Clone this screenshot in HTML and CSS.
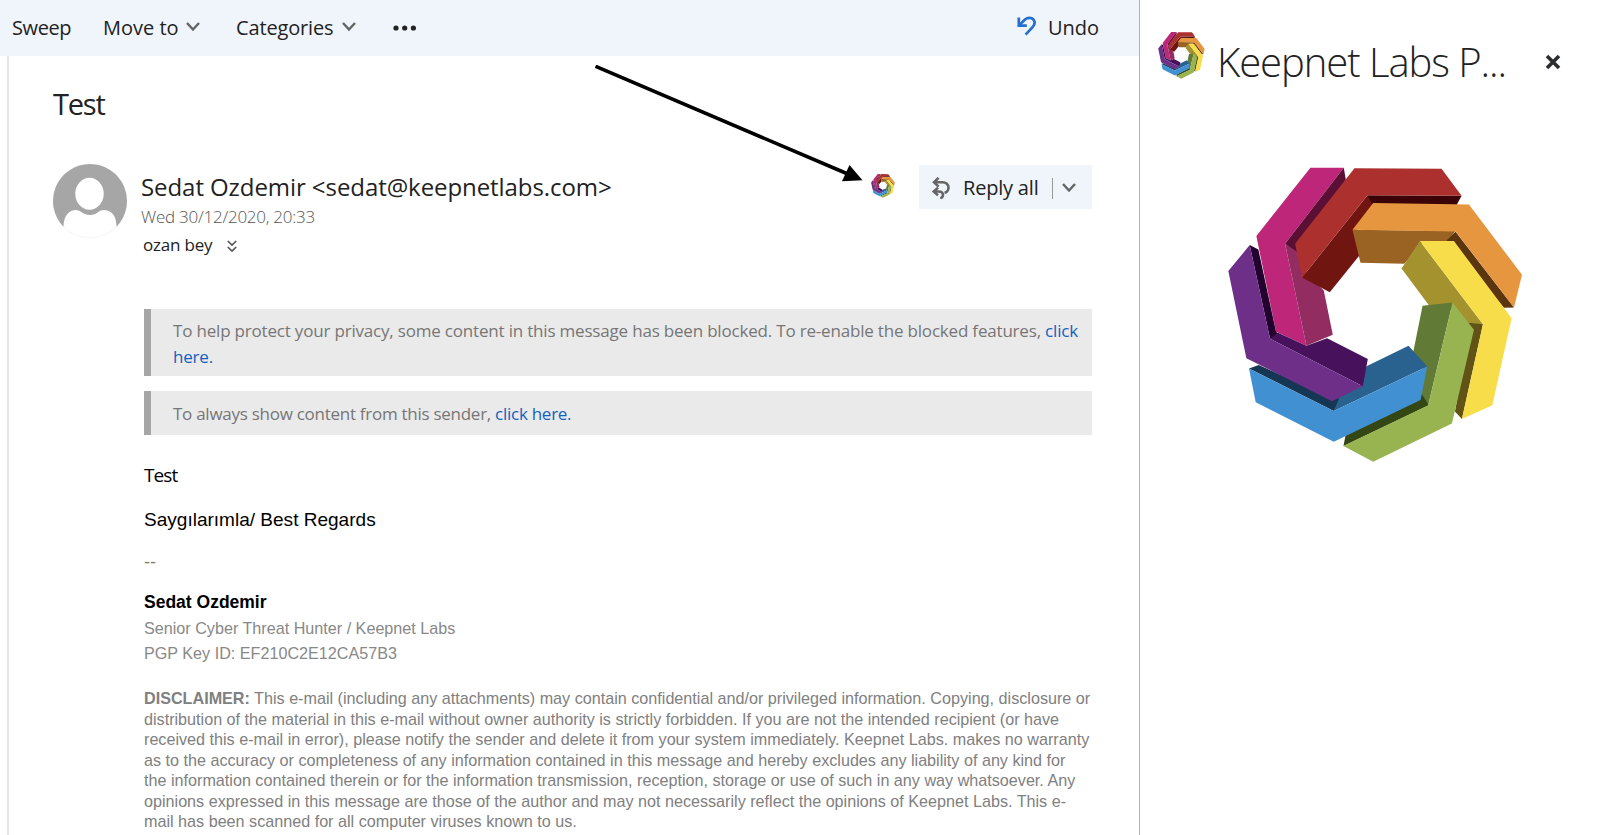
FILE: index.html
```html
<!DOCTYPE html>
<html lang="en">
<head>
<meta charset="utf-8">
<title>Test - Mail</title>
<link rel="stylesheet" href="styles.css">
</head>
<body>
<svg class="defs" width="0" height="0">
  <symbol id="logo" viewBox="52 52 890 890">
    <polygon fill="#be2679" points="302,54 402,54 226,282 290,588 199,546 140,259"/>
    <polygon fill="#5b0f35" points="402,54 408,90 270,282 270,320 226,282"/>
    <polygon fill="#922c61" points="226,282 262,306 290,370 342,422 369,555 290,588"/>
    <polygon fill="#3b0307" points="473,137 755,138 740,166 490,168 473,182"/>
    <polygon fill="#701510" points="473,137 490,170 440,240 448,318 360,427 277,383"/>
    <polygon fill="#ac302e" points="434,56 695,57 755,138 473,137 277,383 256,282"/>
    <polygon fill="#9a6324" points="428,240 737,244 712,276 640,280 583,342 452,339"/>
    <polygon fill="#5a350e" points="737,246 912,473 882,474 720,280 710,272"/>
    <polygon fill="#e6963e" points="490,160 777,164 936,375 912,473 737,245 428,240"/>
    <polygon fill="#a4922f" points="630,274 819,523 780,535 720,480 657,466 575,356"/>
    <polygon fill="#615316" points="775,519 819,523 756,807 735,785 780,540"/>
    <polygon fill="#f8dd4a" points="630,274 732,274 905,505 847,766 756,807 819,523"/>
    <polygon fill="#617a35" points="638,468 728,458 655,766 630,745 640,650 610,607"/>
    <polygon fill="#334614" points="401,888 407,857 625,740 636,733 657,766"/>
    <polygon fill="#97b451" points="728,458 792,540 726,821 490,935 401,888 655,766"/>
    <polygon fill="#29628f" points="372,783 380,740 452,705 470,649 596,588 652,650"/>
    <polygon fill="#163754" points="118,656 147,645 367,745 388,745 372,783"/>
    <polygon fill="#4190d2" points="118,656 372,783 652,650 632,750 372,875 138,757"/>
    <polygon fill="#24022f" points="120,286 146,299 199,546 210,555 181,567"/>
    <polygon fill="#48115b" points="181,567 205,549 290,588 352,565 474,627 459,709"/>
    <polygon fill="#6e2f88" points="120,286 181,567 459,709 367,754 110,625 56,364"/>
  </symbol>
  <symbol id="chevron" viewBox="0 0 14 10">
    <path d="M1 1 L7 7.500 L13 1" fill="none" stroke="#666" stroke-width="2.5"/>
  </symbol>
</svg>

<main class="reading-pane">
  <nav class="toolbar">
    <span class="tool sweep">Sweep</span>
    <span class="tool move">Move to</span>
    <svg class="chevron chevron-move"><use href="#chevron"/></svg>
    <span class="tool categories">Categories</span>
    <svg class="chevron chevron-categories"><use href="#chevron"/></svg>
    <svg class="dots" viewBox="0 0 24 6"><circle cx="3" cy="3" r="2.600"/><circle cx="11.7" cy="3" r="2.600"/><circle cx="20.4" cy="3" r="2.600"/></svg>
    <svg class="undo-icon" viewBox="0 0 20 20"><g fill="none" stroke="#2470d0" stroke-width="2.700"><path d="M1.8 1.6V9.6H9.8"/><path d="M2.2 9.2L8 3.6C10.500 1.400 14.400 1.200 16.400 3.500C18.200 5.900 17.900 8.500 15.800 10.800L8.6 18.6"/></g></svg>
    <span class="tool">Undo</span>
  </nav>

  <article class="message">
    <h1 class="subject">Test</h1>
    <header class="message-header">
      <svg class="avatar" viewBox="0 0 74 74">
        <circle cx="37" cy="37" r="36.8" fill="#fff" stroke="#e6e6e6" stroke-width=".4"/>
        <path fill="#a6a6a6" d="M37 0A37 37 0 0 1 63.5 62.8C63.5 50 57 46 50.5 46C46 46 44 51 37 51C30 51 28 46 22.5 46C17 46 10.5 51 10.5 62.8A37 37 0 0 1 37 0Z"/>
        <ellipse cx="36.500" cy="29.800" rx="14.200" ry="16" fill="#fff"/>
      </svg>
      <div class="sender">
        <div class="sender-name">Sedat Ozdemir &lt;sedat@keepnetlabs.com&gt;</div>
        <div class="date">Wed 30/12/2020, 20:33</div>
        <div class="recipient">ozan bey
          <svg class="expand" viewBox="0 0 10 12"><path d="M.8 1L5 5L9.200 1M.8 7L5 11L9.200 7" fill="none" stroke="#555" stroke-width="1.700"/></svg>
        </div>
      </div>
      <svg class="addin"><use href="#logo"/></svg>
      <button class="reply">
        <svg class="reply-icon" viewBox="0 0 18 22"><g fill="none" stroke="#666" stroke-width="2.600"><path d="M6.600 .8L2 5.200L6.600 9.600"/><path d="M2.500 5.200H10.500C14 5.200 16.500 7.400 16.500 10.500C16.500 13.500 14.500 15.500 12.500 15.800"/><path d="M6 10.800L1.800 14.500L6 18.200"/><path d="M2.300 14.500H6.500C9.500 14.500 11 16 11 18C11 19.800 10 21 8.300 21.300"/></g></svg>
        <span class="reply-label">Reply all</span>
        <span class="reply-divider"></span>
        <svg class="reply-chevron"><use href="#chevron"/></svg>
      </button>
    </header>

    <section class="content">
      <div class="notice notice-privacy">To help protect your privacy, some content in this message has been blocked. To re-enable the blocked features, <a>click<br>here.</a></div>
      <div class="notice notice-sender">To always show content from this sender, <a>click here.</a></div>
      <p class="body-text">Test</p>
      <p class="regards">Saygılarımla/ Best Regards</p>
      <p class="dashes">--</p>
      <p class="signature-name">Sedat Ozdemir</p>
      <p class="signature-line">Senior Cyber Threat Hunter / Keepnet Labs</p>
      <p class="signature-line">PGP Key ID: EF210C2E12CA57B3</p>
      <p class="disclaimer"><b>DISCLAIMER:</b> This e-mail (including any attachments) may contain confidential and/or privileged information. Copying, disclosure or<br>distribution of the material in this e-mail without owner authority is strictly forbidden. If you are not the intended recipient (or have<br>received this e-mail in error), please notify the sender and delete it from your system immediately. Keepnet Labs. makes no warranty<br>as to the accuracy or completeness of any information contained in this message and hereby excludes any liability of any kind for<br>the information contained therein or for the information transmission, reception, storage or use of such in any way whatsoever. Any<br>opinions expressed in this message are those of the author and may not necessarily reflect the opinions of Keepnet Labs. This e-<br>mail has been scanned for all computer viruses known to us.</p>
    </section>
  </article>
</main>

<aside class="addin-panel">
  <header class="panel-header">
    <svg class="panel-logo"><use href="#logo"/></svg>
    <h2 class="panel-title">Keepnet Labs P...</h2>
    <svg class="close" viewBox="0 0 16 16"><path d="M2 2L14 14M14 2L2 14" stroke="#2b2d31" stroke-width="3.600"/></svg>
  </header>
  <svg class="hero-logo"><use href="#logo"/></svg>
</aside>

<svg class="pointer" viewBox="0 0 270 120">
  <path d="M.5 1.300L254 109.500" stroke="#000" stroke-width="3.600"/>
  <polygon points="254.500,100 267.500,115.200 247,116.300"/>
</svg>
</body>
</html>
```
FILE: styles.css
```css
* { box-sizing: border-box; }
body {
  margin: 0;
  width: 1600px;
  height: 835px;
  overflow: hidden;
  display: flex;
  position: relative;
  background: #fff;
  color: #222;
  font-family: "Open Sans", "Noto Sans", sans-serif;
}
h1, h2, p { margin: 0; font-weight: 400; }
svg { display: block; flex: none; }
.defs { position: absolute; }

.reading-pane { width: 1139px; flex: none; }
.toolbar {
  height: 56px;
  padding: 0 40px 2px 12px;
  display: flex;
  align-items: center;
  background: #f0f5fb;
  font-size: 20px;
  white-space: nowrap;
}
.sweep { width: 91px; letter-spacing: -.4px; }
.move { width: 83px; }
.chevron { width: 14px; height: 10px; }
.chevron-move { margin-right: 36px; }
.categories { width: 106px; letter-spacing: -.15px; }
.chevron-categories { margin-right: 37px; }
.dots { width: 24px; height: 6px; margin-top: 1px; fill: #222; }
.undo-icon { width: 20px; height: 20px; margin: 0 11px 2px auto; }

.message {
  height: 779px;
  margin-left: 7px;
  padding: 28px 47px 0 44px;
  border-left: 2px solid #e4e4e4;
}
.subject { font-size: 29px; line-height: 40px; letter-spacing: -1.2px; }
.message-header { margin-top: 40px; height: 95px; display: flex; align-items: flex-start; }
.avatar { width: 74px; height: 74px; }
.sender { padding: 7px 0 0 14px; white-space: nowrap; }
.sender-name { font-size: 24px; line-height: 32px; letter-spacing: -.07px; }
.date { font-size: 17px; line-height: 28px; font-weight: 300; letter-spacing: -.25px; color: #555; }
.recipient { display: flex; align-items: center; gap: 15px; font-size: 17px; line-height: 28px; letter-spacing: -.2px; padding-left: 2px; }
.expand { width: 10px; height: 12px; margin-top: 2px; }
.addin { width: 24px; height: 24px; margin: 10px 24px 0 auto; }
.reply {
  width: 173px;
  height: 44px;
  margin-top: 1px;
  padding: 1px 0 0 13px;
  display: flex;
  align-items: center;
  border: 0;
  background: #f0f5fb;
  color: #222;
  font: 20px "Open Sans", "Noto Sans", sans-serif;
  letter-spacing: -.2px;
  text-align: left;
}
.reply-icon { width: 18px; height: 22px; }
.reply-label { width: 89px; margin-left: 13px; }
.reply-divider { width: 1px; height: 21px; margin-top: 2px; background: #999; }
.reply-chevron { width: 14px; height: 10px; margin: 0 0 0 9px; }

.content { margin: 50px 0 0 91px; color: #000; white-space: nowrap; font-family: "Liberation Sans", Arial, sans-serif; }
.notice {
  border-left: 7px solid #a6a6a6;
  background: #eaeaea;
  color: #767676;
  font: 17px/26px "Open Sans", "Noto Sans", sans-serif;
  letter-spacing: -.19px;
}
.notice a { color: #1560bd; }
.notice-privacy { padding: 9px 0 6px 22px; }
.notice-sender { margin-top: 15px; padding: 10px 0 8px 22px; letter-spacing: -.27px; }
.body-text { margin-top: 27px; font: 19px/26px "Open Sans", "Noto Sans", sans-serif; letter-spacing: -.9px; }
.regards { margin-top: 19px; font-size: 19.050px; line-height: 26px; }
.dashes { margin-top: 16px; font-size: 18px; line-height: 26px; color: #808080; }
.signature-name { margin-top: 15px; font-size: 17.500px; line-height: 25px; font-weight: 700; }
.signature-line { font-size: 16.160px; line-height: 25px; color: #888; }
.signature-name + .signature-line { margin-top: 1px; }
.disclaimer { margin-top: 22px; font-size: 16.170px; line-height: 20.550px; color: #808080; }

.addin-panel { flex: 1; border-left: 1px solid #b4b4b4; padding: 32px 39px 0 18px; }
.panel-header { display: flex; align-items: flex-start; height: 135px; }
.panel-logo { width: 47px; height: 47px; }
.panel-title { margin: 5px 0 0 12px; font-size: 40px; line-height: 50px; font-weight: 300; letter-spacing: -1.050px; white-space: nowrap; }
.close { width: 16px; height: 16px; margin: 22px 0 0 auto; }
.hero-logo { width: 297px; height: 297px; margin-left: 69px; }

/* Annotation arrow pointing at the add-in button. */
.pointer { position: absolute; left: 595px; top: 65px; width: 270px; height: 120px; }
```
